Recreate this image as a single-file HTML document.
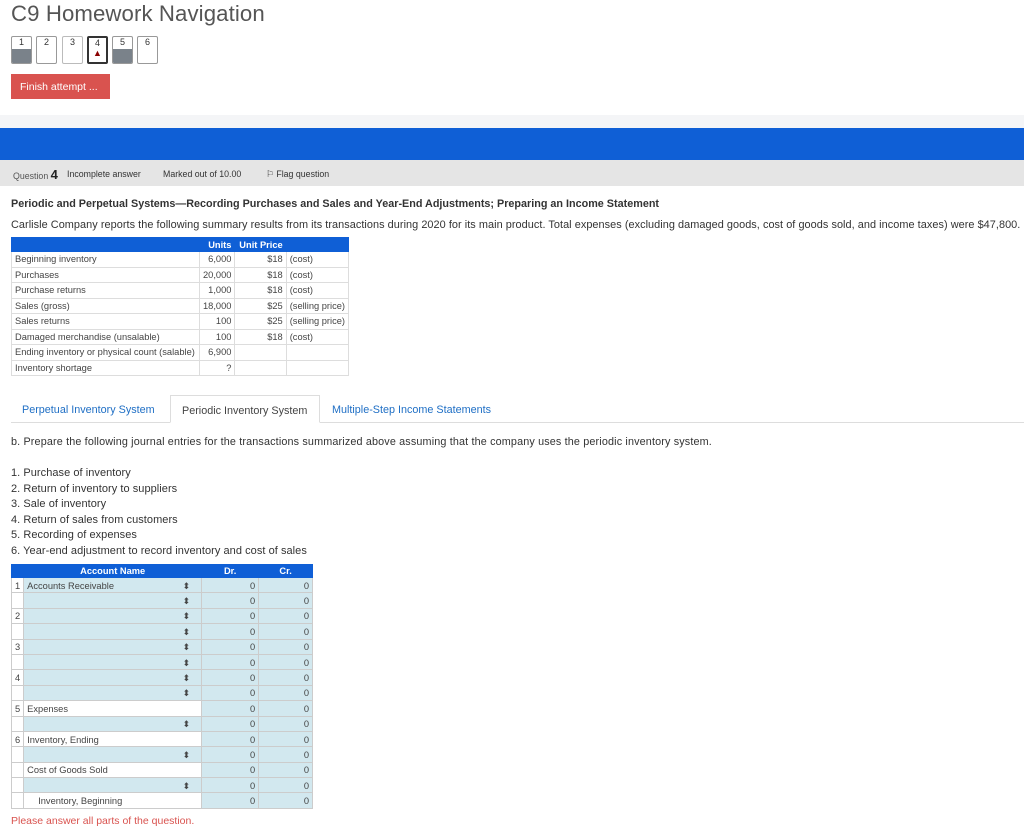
<!DOCTYPE html>
<html><head><style>
*{margin:0;padding:0;box-sizing:border-box}
body{width:1024px;height:833px;background:#fff;font-family:"Liberation Sans",sans-serif;color:#333;position:relative;overflow:hidden;font-size:9.5px}
.a{position:absolute}
h1{position:absolute;left:11px;top:1px;font-size:22.2px;font-weight:normal;color:#555;letter-spacing:0.1px}
.nb{position:absolute;top:36px;width:21px;height:28px;border:1px solid #999;border-radius:2px;background:#fff;font-size:9px;text-align:center;line-height:11px;overflow:hidden}
.nb .f{position:absolute;left:0;right:0;bottom:0;height:14px;background:#7a828a}
table{border-collapse:collapse;position:absolute}
td{font-size:9.3px;color:#444;height:15.5px;padding:0 3px;border:1px solid #ccc;white-space:nowrap}
.s td{border-color:#ddd}
.r{text-align:right}
.hd td{background:#0f5fd6;color:#fff;font-weight:bold;border-color:#0f5fd6;height:14px}
.j td{height:15.4px;line-height:12px;padding-top:1px;padding-bottom:0}
.j .hd td{height:13px;line-height:11px;padding-top:0}
.bl{background:#d2e8ef}
.ar{float:right;font-size:9px;color:#444;margin-right:8px}
</style></head><body>
<h1>C9 Homework Navigation</h1>
<div class="nb" style="left:11px">1<div class="f"></div></div>
<div class="nb" style="left:36px">2</div>
<div class="nb" style="left:62px;border-color:#bbb">3</div>
<div class="nb" style="left:87px;border:2px solid #333;line-height:10px">4<div style="color:#8b0000;font-size:9px;line-height:11px">&#9650;&#xFE0E;</div></div>
<div class="nb" style="left:112px">5<div class="f"></div></div>
<div class="nb" style="left:137px">6</div>
<div class="a" style="left:11px;top:74px;width:99px;height:25px;background:#d9534f;color:#fff;font-size:10.5px;line-height:26px;padding-left:9px">Finish attempt ...</div>
<div class="a" style="left:0;top:115px;width:1024px;height:13px;background:#f4f5f7"></div>
<div class="a" style="left:0;top:128px;width:1024px;height:32px;background:#0f5fd6"></div>
<div class="a" style="left:0;top:160px;width:1024px;height:26px;background:#e5e5e5;font-size:8.8px;line-height:29px;color:#333">
<span class="a" style="left:13px;color:#555">Question <b style="font-size:13px;color:#222">4</b></span>
<span class="a" style="left:67px">Incomplete answer</span>
<span class="a" style="left:163px">Marked out of 10.00</span>
<span class="a" style="left:266px">⚐ Flag question</span></div>
<div class="a" style="left:11px;top:198px;font-size:10.8px;font-weight:bold;color:#333">Periodic and Perpetual Systems—Recording Purchases and Sales and Year-End Adjustments; Preparing an Income Statement</div>
<div class="a" style="left:11px;top:219px;font-size:10.9px;letter-spacing:0.05px;color:#333">Carlisle Company reports the following summary results from its transactions during 2020 for its main product. Total expenses (excluding damaged goods, cost of goods sold, and income taxes) were $47,800.</div>
<table class="s" style="left:11px;top:237px;width:338px">
<tr class="hd"><td style="width:189px"></td><td class="r" style="width:35px">Units</td><td class="r" style="width:52px">Unit Price</td><td></td></tr>
<tr><td>Beginning inventory</td><td class="r">6,000</td><td class="r">$18</td><td>(cost)</td></tr>
<tr><td>Purchases</td><td class="r">20,000</td><td class="r">$18</td><td>(cost)</td></tr>
<tr><td>Purchase returns</td><td class="r">1,000</td><td class="r">$18</td><td>(cost)</td></tr>
<tr><td>Sales (gross)</td><td class="r">18,000</td><td class="r">$25</td><td>(selling price)</td></tr>
<tr><td>Sales returns</td><td class="r">100</td><td class="r">$25</td><td>(selling price)</td></tr>
<tr><td>Damaged merchandise (unsalable)</td><td class="r">100</td><td class="r">$18</td><td>(cost)</td></tr>
<tr><td>Ending inventory or physical count (salable)</td><td class="r">6,900</td><td></td><td></td></tr>
<tr><td>Inventory shortage</td><td class="r">?</td><td></td><td></td></tr>
</table>
<div class="a" style="left:11px;top:422px;width:1013px;border-top:1px solid #ddd"></div>
<div class="a" style="left:22px;top:404px;font-size:10.8px;color:#1f6fc5">Perpetual Inventory System</div>
<div class="a" style="left:170px;top:395px;width:150px;height:28px;border:1px solid #ddd;border-bottom:1px solid #fff;background:#fff;font-size:10.8px;color:#444;padding:9px 0 0 11px">Periodic Inventory System</div>
<div class="a" style="left:332px;top:404px;font-size:10.8px;color:#1f6fc5">Multiple-Step Income Statements</div>
<div class="a" style="left:11px;top:436px;font-size:10.8px;letter-spacing:0.15px;color:#333">b. Prepare the following journal entries for the transactions summarized above assuming that the company uses the periodic inventory system.</div>
<div class="a" style="left:11px;top:466px;font-size:11px;letter-spacing:0.05px;line-height:15.5px;color:#333">1. Purchase of inventory<br>2. Return of inventory to suppliers<br>3. Sale of inventory<br>4. Return of sales from customers<br>5. Recording of expenses<br>6. Year-end adjustment to record inventory and cost of sales</div>
<table class="j" style="left:11px;top:564px;width:302px">
<tr class="hd"><td style="width:11px"></td><td style="width:178px;text-align:center">Account Name</td><td style="width:57px;text-align:center">Dr.</td><td style="text-align:center">Cr.</td></tr>
<tr><td>1</td><td class="bl">Accounts Receivable<span class="ar">⬍</span></td><td class="bl r">0</td><td class="bl r">0</td></tr>
<tr><td></td><td class="bl"><span class="ar">⬍</span></td><td class="bl r">0</td><td class="bl r">0</td></tr>
<tr><td>2</td><td class="bl"><span class="ar">⬍</span></td><td class="bl r">0</td><td class="bl r">0</td></tr>
<tr><td></td><td class="bl"><span class="ar">⬍</span></td><td class="bl r">0</td><td class="bl r">0</td></tr>
<tr><td>3</td><td class="bl"><span class="ar">⬍</span></td><td class="bl r">0</td><td class="bl r">0</td></tr>
<tr><td></td><td class="bl"><span class="ar">⬍</span></td><td class="bl r">0</td><td class="bl r">0</td></tr>
<tr><td>4</td><td class="bl"><span class="ar">⬍</span></td><td class="bl r">0</td><td class="bl r">0</td></tr>
<tr><td></td><td class="bl"><span class="ar">⬍</span></td><td class="bl r">0</td><td class="bl r">0</td></tr>
<tr><td>5</td><td>Expenses</td><td class="bl r">0</td><td class="bl r">0</td></tr>
<tr><td></td><td class="bl"><span class="ar">⬍</span></td><td class="bl r">0</td><td class="bl r">0</td></tr>
<tr><td>6</td><td>Inventory, Ending</td><td class="bl r">0</td><td class="bl r">0</td></tr>
<tr><td></td><td class="bl"><span class="ar">⬍</span></td><td class="bl r">0</td><td class="bl r">0</td></tr>
<tr><td></td><td>Cost of Goods Sold</td><td class="bl r">0</td><td class="bl r">0</td></tr>
<tr><td></td><td class="bl"><span class="ar">⬍</span></td><td class="bl r">0</td><td class="bl r">0</td></tr>
<tr><td></td><td style="padding-left:14px">Inventory, Beginning</td><td class="bl r">0</td><td class="bl r">0</td></tr>
</table>
<div class="a" style="left:11px;top:815px;font-size:10.5px;color:#d9534f">Please answer all parts of the question.</div>
</body></html>
